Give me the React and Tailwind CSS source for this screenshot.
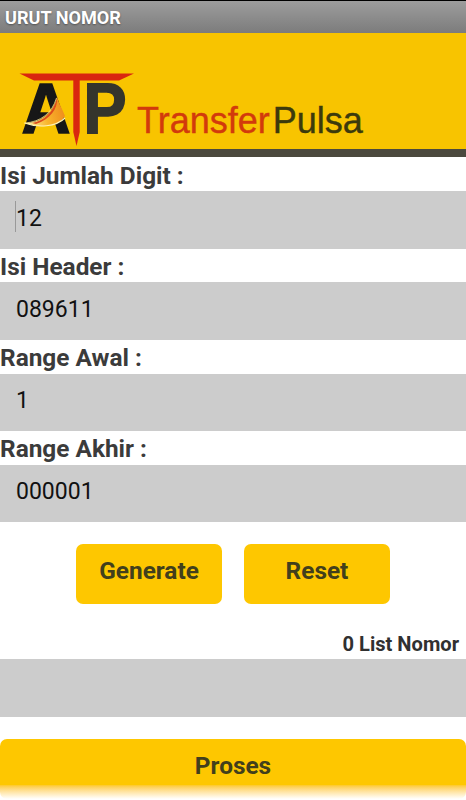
// UrutNomorPage.jsx
import React from 'react';

const FIELDS = [
    { id: 'digit', label: "Isi Jumlah Digit :", value: "12", focused: true },
    { id: 'header', label: "Isi Header :", value: "089611" },
    { id: 'awal', label: "Range Awal :", value: "1" },
    { id: 'akhir', label: "Range Akhir :", value: "000001" },
];

const Logo = () => (
    <svg width="120" height="80" viewBox="0 0 120 80" className="shrink-0">
        <defs>
            <linearGradient id="swoosh" x1="0" y1="0.6" x2="1" y2="0.4">
                <stop offset="0" stopColor="#fdf0a0" />
                <stop offset="0.5" stopColor="#f9b52c" />
                <stop offset="1" stopColor="#ee8a1c" />
            </linearGradient>
        </defs>

        <g fontFamily="Liberation Sans, Arial, sans-serif" fontWeight="700" fontSize="70">
            <text x="5.500" y="63" textLength="49" lengthAdjust="spacingAndGlyphs" fill="#171717" stroke="#171717" strokeWidth="1.6">A</text>
            <text x="67.500" y="63" textLength="43" lengthAdjust="spacingAndGlyphs" fill="#35352c" stroke="#35352c" strokeWidth="1.8">P</text>
        </g>

        {/* swoosh over the A */}
        <path d="M8.500 53 C25 53 37 43 41 27 C43 34 46 38 49 46 C42 58 24 58 8.500 53Z" fill="url(#swoosh)" />
        <path d="M16 53 C28 51 38 42 41 28 C42 39 34 49 20 54Z" fill="#dc4a1c" />
        <path d="M8.500 53 C22 58 40 57 49 48" fill="none" stroke="#fff3b8" strokeWidth="1.2" />
        <path d="M8.500 53 C25 52 36 43 40.500 28" fill="none" stroke="#fbe58a" strokeWidth="0.8" />

        {/* red bar and spike */}
        <path d="M3.500 3.500 H118 L103 10.500 H18Z" fill="#d9260f" />
        <path d="M57.300 9 H63.700 V62 L60.500 76 L57.300 62Z" fill="#d9260f" />
    </svg>
);

const Field = ({ label, value, focused }) => (
    <div>
        <div className="h-[33.8px] pt-[1.4px] text-[24.4px] leading-[34px] font-bold text-[#3b3b3b]">{label}</div>
        <div className="h-[57.4px] bg-[#cccccc] pl-[15px] pt-[10px] flex items-start">
            <span className={focused ? "w-px h-[31px] bg-[#999999]" : "w-px h-[31px]"} />
            <span className="pt-[1.4px] text-[23px] leading-[32px] text-[#111111]">{value}</span>
        </div>
    </div>
);

const Button = ({ children }) => (
    <button className="w-[146px] h-[60px] pb-[5px] rounded-[7px] bg-[#fec700] text-[24.4px] font-bold text-[#423f1c]">
        {children}
    </button>
);

const App = () => {
    return (
        <div className="w-full h-[800px] overflow-hidden bg-white font-['Roboto',sans-serif]">
            <div className="h-[33.4px] border-t border-black bg-linear-to-b from-[#9d9d9d] to-[#7c7c7c] pl-[5px] text-[18.1px] leading-[33px] font-bold text-white [text-shadow:0_1px_2px_rgba(0,0,0,0.4)]">
                URUT NOMOR
            </div>

            <div className="h-[124px] border-b-8 border-[#4b493e] bg-[#f8c400] pl-[16px] pt-[37px] flex items-start">
                <Logo />
                <div className="flex pl-px pt-[30px] gap-[3px] font-['Liberation_Sans',Arial,sans-serif] text-[36px] leading-[41px] [-webkit-text-stroke:0.4px]">
                    <span className="text-[#d23a0c]">Transfer</span>
                    <span className="text-[#3c3a0c]">Pulsa</span>
                </div>
            </div>

            {FIELDS.map((field) => (
                <Field key={field.id} label={field.label} value={field.value} focused={field.focused} />
            ))}

            <div className="mt-[22px] flex justify-center gap-[22px]">
                <Button>Generate</Button>
                <Button>Reset</Button>
            </div>

            <div className="h-[55px] pt-[25px] pr-[7px] text-right text-[20.1px] leading-[30px] font-bold text-[#303030]">
                0 List Nomor
            </div>
            <div className="h-[58px] bg-[#cccccc]" />

            <button className="mt-[22px] block w-full h-[60px] pb-[5px] rounded-[7px] bg-linear-to-b from-[#fec700] from-[76%] to-white text-[24.4px] font-bold text-[#423f1c]">
                Proses
            </button>
        </div>
    );
};

export default App;
